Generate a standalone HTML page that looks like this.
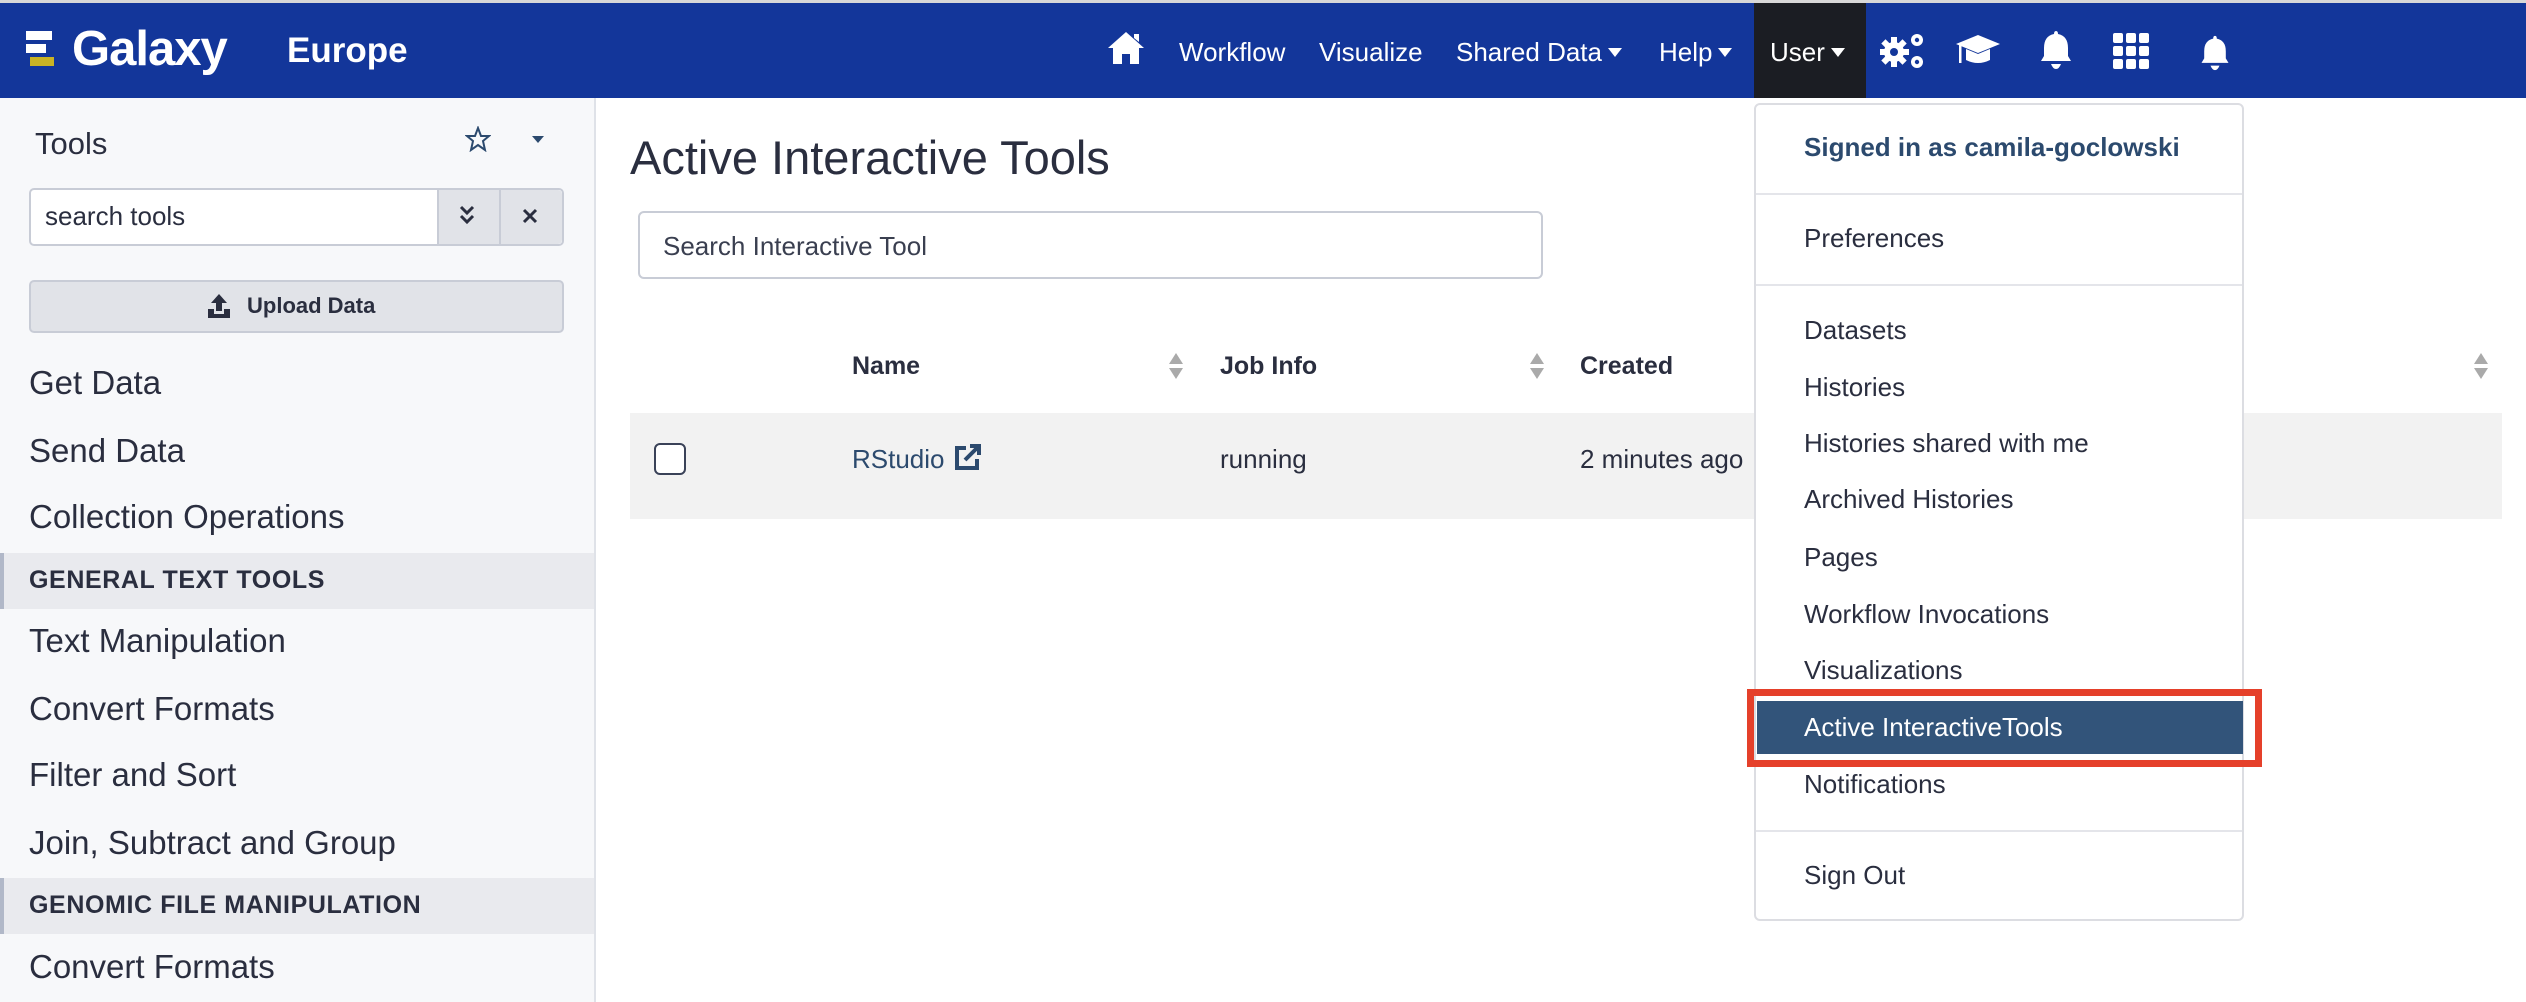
<!DOCTYPE html>
<html><head><meta charset="utf-8">
<style>
*{margin:0;padding:0;box-sizing:border-box}
body{width:2526px;height:1002px;overflow:hidden;background:#fff;font-family:"Liberation Sans",Arial,sans-serif;color:#2c3143;position:relative}
.a{position:absolute;white-space:nowrap}
#top{position:absolute;left:0;top:0;width:2526px;height:3px;background:#d8d8d8}
#nav{position:absolute;left:0;top:3px;width:2526px;height:95px;background:#13369a}
.nv{position:absolute;top:34px;color:#fff;font-size:26px;line-height:30px}
.car{display:inline-block;width:0;height:0;border-left:7px solid transparent;border-right:7px solid transparent;border-top:9px solid #fff;vertical-align:middle;margin-left:6px;margin-top:-4px}
#side{position:absolute;left:0;top:98px;width:596px;height:904px;background:#f7f8fa;border-right:2px solid #dfe2e8}
.si{position:absolute;left:29px;font-size:33px;color:#2a2e3f}
.band{position:absolute;left:0;width:594px;height:56px;background:#e9eaee;border-left:4px solid #b1b8c8}
.band span{position:absolute;left:25px;top:13px;font-size:25px;font-weight:bold;color:#2a2e3f;letter-spacing:.6px}
.dd{position:absolute;left:1804px;font-size:26px;color:#2a2e3f}
.hr{position:absolute;left:1756px;width:486px;height:2px;background:#e4e5ea}
</style></head><body>
<div id="top"></div>
<div id="nav">
  <div class="a" style="left:26px;top:28px;width:26px;height:9px;background:#fff"></div>
  <div class="a" style="left:26px;top:41px;width:20px;height:9px;background:#fff"></div>
  <div class="a" style="left:30px;top:54px;width:24px;height:9px;background:#c9b324"></div>
  <div class="a" style="left:72px;top:18px;font-size:49px;font-weight:bold;color:#fff;letter-spacing:-1px">Galaxy</div>
  <div class="a" style="left:287px;top:28px;font-size:35px;font-weight:bold;color:#fff">Europe</div>
  <svg class="a" style="left:1106px;top:27px" width="40" height="36" viewBox="0 0 40 36"><path d="M20 2 L38 18 L33 18 L33 34 L24 34 L24 24 L16 24 L16 34 L7 34 L7 18 L2 18 Z M28 4 L33 4 L33 12 L28 8Z" fill="#fff"/></svg>
  <div class="nv" style="left:1179px">Workflow</div>
  <div class="nv" style="left:1319px">Visualize</div>
  <div class="nv" style="left:1456px">Shared Data<span class="car"></span></div>
  <div class="nv" style="left:1659px">Help<span class="car"></span></div>
  <div class="a" style="left:1754px;top:0;width:112px;height:95px;background:#1b1d23"></div>
  <div class="nv" style="left:1770px">User<span class="car"></span></div>
  <svg class="a" style="left:1880px;top:27px" width="48" height="40" viewBox="0 0 48 40"><circle cx="14" cy="22" r="10" fill="#fff"/><g fill="#fff"><rect x="11" y="7" width="6" height="30"/><rect x="-1" y="19" width="30" height="6"/><rect x="11" y="7" width="6" height="30" transform="rotate(45 14 22)"/><rect x="11" y="7" width="6" height="30" transform="rotate(-45 14 22)"/></g><circle cx="14" cy="22" r="4" fill="#13369a"/><circle cx="37" cy="10" r="6" fill="#fff"/><circle cx="37" cy="10" r="2.2" fill="#13369a"/><circle cx="37" cy="32" r="6" fill="#fff"/><circle cx="37" cy="32" r="2.2" fill="#13369a"/></svg>
  <svg class="a" style="left:1955px;top:30px" width="46" height="34" viewBox="0 0 46 34"><path d="M23 2 L45 11 L23 20 L1 11Z" fill="#fff"/><path d="M11 16 L11 27 Q23 33 35 27 L35 16 L23 21Z" fill="#fff"/><rect x="4" y="12" width="2.5" height="18" fill="#fff"/></svg>
  <svg class="a" style="left:2040px;top:27px" width="32" height="40" viewBox="0 0 32 40"><path d="M16 1 Q18 1 18 4 Q28 6 28 18 L28 26 L31 31 L1 31 L4 26 L4 18 Q4 6 14 4 Q14 1 16 1Z" fill="#fff"/><path d="M11 34 L21 34 Q19 39 16 39 Q13 39 11 34Z" fill="#fff"/></svg>
  <svg class="a" style="left:2113px;top:30px" width="36" height="36" viewBox="0 0 36 36"><g fill="#fff"><rect x="0" y="0" width="10" height="10" rx="2"/><rect x="13" y="0" width="10" height="10" rx="2"/><rect x="26" y="0" width="10" height="10" rx="2"/><rect x="0" y="13" width="10" height="10" rx="2"/><rect x="13" y="13" width="10" height="10" rx="2"/><rect x="26" y="13" width="10" height="10" rx="2"/><rect x="0" y="26" width="10" height="10" rx="2"/><rect x="13" y="26" width="10" height="10" rx="2"/><rect x="26" y="26" width="10" height="10" rx="2"/></g></svg>
  <svg class="a" style="left:2200px;top:32px" width="30" height="36" viewBox="0 0 32 40"><path d="M16 1 Q18 1 18 4 Q28 6 28 18 L28 26 L31 31 L1 31 L4 26 L4 18 Q4 6 14 4 Q14 1 16 1Z" fill="#fff"/><path d="M11 34 L21 34 Q19 39 16 39 Q13 39 11 34Z" fill="#fff"/></svg>
</div>

<div id="side">
  <div class="a" style="left:35px;top:28px;font-size:31px;color:#2a2e3f">Tools</div>
  <svg class="a" style="left:465px;top:28px" width="26" height="26" viewBox="0 0 26 26"><path d="M13 2 L16 10 L24 10 L18 15 L20 24 L13 19 L6 24 L8 15 L2 10 L10 10Z" fill="none" stroke="#2c4a6e" stroke-width="2"/></svg>
  <div class="a" style="left:532px;top:38px;width:0;height:0;border-left:6px solid transparent;border-right:6px solid transparent;border-top:7px solid #2c4a6e"></div>
  <div class="a" style="left:29px;top:90px;width:535px;height:58px;border:2px solid #c8ccd6;border-radius:5px;background:#fff"></div>
  <div class="a" style="left:45px;top:103px;font-size:26px;color:#2a2e3f">search tools</div>
  <div class="a" style="left:437px;top:92px;width:125px;height:54px;background:#e1e3e8;border-left:2px solid #c8ccd6;border-radius:0 4px 4px 0"></div>
  <div class="a" style="left:499px;top:92px;width:2px;height:54px;background:#c8ccd6"></div>
  <svg class="a" style="left:459px;top:106px" width="16" height="22" viewBox="0 0 16 22"><path d="M2 3 L8 9 L14 3 M2 12 L8 18 L14 12" stroke="#2a2e3f" stroke-width="3" fill="none"/></svg>
  <svg class="a" style="left:522px;top:110px" width="16" height="16" viewBox="0 0 16 16"><path d="M2 2 L14 14 M14 2 L2 14" stroke="#2a2e3f" stroke-width="3"/></svg>
  <div class="a" style="left:29px;top:182px;width:535px;height:53px;background:#e1e3e8;border:2px solid #c8ccd6;border-radius:5px"></div>
  <svg class="a" style="left:207px;top:195px" width="24" height="26" viewBox="0 0 24 26"><path d="M12 1 L20 10 L15 10 L15 18 L9 18 L9 10 L4 10Z M1 16 L7 16 L7 21 L17 21 L17 16 L23 16 L23 25 L1 25Z" fill="#2a2e3f"/></svg>
  <div class="a" style="left:247px;top:195px;font-size:22px;font-weight:bold;color:#2a2e3f">Upload Data</div>
  <div class="si" style="top:266px">Get Data</div>
  <div class="si" style="top:334px">Send Data</div>
  <div class="si" style="top:400px">Collection Operations</div>
  <div class="band" style="top:455px"><span>GENERAL TEXT TOOLS</span></div>
  <div class="si" style="top:524px">Text Manipulation</div>
  <div class="si" style="top:592px">Convert Formats</div>
  <div class="si" style="top:658px">Filter and Sort</div>
  <div class="si" style="top:726px">Join, Subtract and Group</div>
  <div class="band" style="top:780px"><span>GENOMIC FILE MANIPULATION</span></div>
  <div class="si" style="top:850px">Convert Formats</div>
</div>

<div class="a" style="left:630px;top:130px;font-size:47px;color:#2a2e3f">Active Interactive Tools</div>
<div class="a" style="left:638px;top:211px;width:905px;height:68px;border:2px solid #c8ccd6;border-radius:6px"></div>
<div class="a" style="left:663px;top:231px;font-size:26px;color:#3a3f50">Search Interactive Tool</div>

<div class="a" style="left:852px;top:352px;font-size:25px;font-weight:bold;color:#2a2e3f">Name</div>
<div class="a" style="left:1220px;top:352px;font-size:25px;font-weight:bold;color:#2a2e3f">Job Info</div>
<div class="a" style="left:1580px;top:352px;font-size:25px;font-weight:bold;color:#2a2e3f">Created</div>
<svg class="a" style="left:1168px;top:352px" width="16" height="28" viewBox="0 0 16 28"><path d="M8 1 L15 12 L1 12Z M8 27 L15 16 L1 16Z" fill="#aaa"/></svg>
<svg class="a" style="left:1529px;top:352px" width="16" height="28" viewBox="0 0 16 28"><path d="M8 1 L15 12 L1 12Z M8 27 L15 16 L1 16Z" fill="#aaa"/></svg>
<svg class="a" style="left:2473px;top:352px" width="16" height="28" viewBox="0 0 16 28"><path d="M8 1 L15 12 L1 12Z M8 27 L15 16 L1 16Z" fill="#aaa"/></svg>
<div class="a" style="left:630px;top:413px;width:1872px;height:106px;background:#f2f2f2"></div>
<div class="a" style="left:654px;top:443px;width:32px;height:32px;border:2px solid #3a4258;border-radius:6px;background:#fff"></div>
<div class="a" style="left:852px;top:444px;font-size:26px;color:#2c4a6e">RStudio</div>
<svg class="a" style="left:954px;top:443px" width="28" height="28" viewBox="0 0 28 28"><path d="M12 5 L3 5 L3 25 L23 25 L23 16" stroke="#2c4a6e" stroke-width="4" fill="none"/><path d="M11 17 L24 4 M16 3 L25 3 L25 12" stroke="#2c4a6e" stroke-width="4" fill="none"/></svg>
<div class="a" style="left:1220px;top:444px;font-size:26px;color:#2a2e3f">running</div>
<div class="a" style="left:1580px;top:444px;font-size:26px;color:#2a2e3f">2 minutes ago</div>

<div class="a" style="left:1754px;top:103px;width:490px;height:818px;background:#fff;border:2px solid #dcdde2;border-radius:6px"></div>
<div class="dd" style="top:132px;font-weight:bold;color:#2c4a6e">Signed in as camila-goclowski</div>
<div class="hr" style="top:193px"></div>
<div class="dd" style="top:223px">Preferences</div>
<div class="hr" style="top:284px"></div>
<div class="dd" style="top:315px">Datasets</div>
<div class="dd" style="top:372px">Histories</div>
<div class="dd" style="top:428px">Histories shared with me</div>
<div class="dd" style="top:484px">Archived Histories</div>
<div class="dd" style="top:542px">Pages</div>
<div class="dd" style="top:599px">Workflow Invocations</div>
<div class="dd" style="top:655px">Visualizations</div>
<div class="a" style="left:1747px;top:689px;width:515px;height:78px;border:7px solid #e5402a"></div>
<div class="a" style="left:1757px;top:701px;width:486px;height:53px;background:#32547a"></div>
<div class="dd" style="top:712px;color:#fff">Active InteractiveTools</div>
<div class="dd" style="top:769px">Notifications</div>
<div class="hr" style="top:830px"></div>
<div class="dd" style="top:860px">Sign Out</div>
</body></html>
